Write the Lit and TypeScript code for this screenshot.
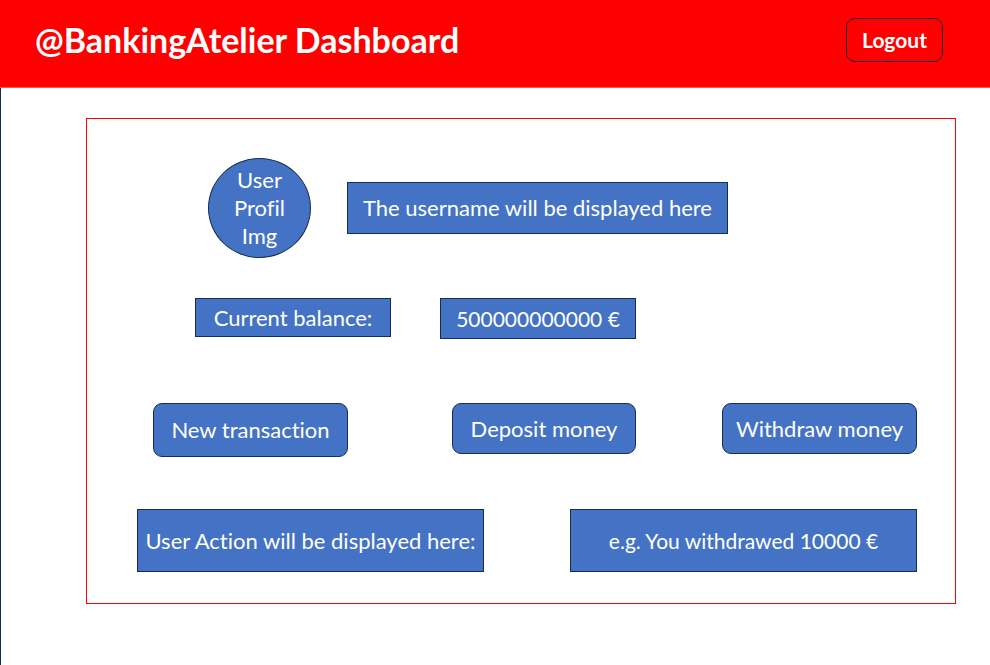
import { LitElement, html, css } from "lit";
import { customElement } from "lit/decorators.js";

@customElement("app-root")
export class AppRoot extends LitElement {
  static styles = css`
    :host {
      display: flex;
      flex-direction: column;
      min-height: 100vh;
      background: #ffffff;
      color: #ffffff;
      font-family: Lato, "Liberation Sans", sans-serif;
      font-size: 22px;
      line-height: 28px;
      font-variant-ligatures: none;
    }
    * {
      box-sizing: border-box;
      margin: 0;
    }
    .header {
      display: flex;
      align-items: center;
      justify-content: space-between;
      padding: 18px 47px 25px 35px;
      background: #ff0000;
      border-bottom: 1px solid #ff5a1e;
    }
    .title {
      font-size: 34px;
      line-height: 44px;
      font-weight: 700;
    }
    button {
      font: inherit;
      color: inherit;
      border: 1px solid #172c51;
      border-radius: 9px;
      padding: 0;
      cursor: pointer;
      white-space: nowrap;
    }
    .logout {
      width: 97px;
      height: 44px;
      background: transparent;
      font-size: 21px;
      font-weight: 700;
    }
    .main {
      flex: 1;
      border-left: 1px solid #172c51;
      padding: 30px 34px 61px 85px;
    }
    .panel {
      border: 1px solid #ff0000;
      padding: 39px 38px 31px 50px;
    }
    .row {
      display: flex;
      align-items: flex-start;
    }
    .box {
      display: flex;
      align-items: center;
      justify-content: center;
      background: #4472c4;
      border: 1px solid #172c51;
      text-align: center;
      white-space: nowrap;
    }
    .profile {
      align-items: center;
      gap: 36px;
      padding-left: 71px;
    }
    .avatar {
      width: 103px;
      height: 100px;
      border-radius: 50%;
      padding: 0 20px;
      white-space: normal;
    }
    .username {
      width: 381px;
      height: 52px;
    }
    .balance {
      gap: 49px;
      margin-top: 40px;
      padding-left: 58px;
    }
    .label {
      width: 196px;
      height: 39px;
    }
    .amount {
      width: 196px;
      height: 41px;
    }
    .figures {
      font-size: 21px;
    }
    .actions {
      display: grid;
      grid-template-columns: 299fr 270fr 195fr;
      margin-top: 64px;
      padding-left: 16px;
    }
    .action {
      width: 195px;
      height: 51px;
      background: #4472c4;
    }
    .transaction {
      height: 54px;
    }
    .deposit {
      width: 184px;
    }
    .log {
      align-items: flex-end;
      justify-content: space-between;
      margin-top: 52px;
    }
    .entry {
      width: 347px;
      height: 63px;
    }
  `;

  render() {
    return html`
      <header class="header">
        <h1 class="title">@BankingAtelier Dashboard</h1>
        <button class="logout" type="button">Logout</button>
      </header>
      <main class="main">
        <section class="panel">
          <div class="row profile">
            <div class="box avatar">User Profil Img</div>
            <p class="box username">The username will be displayed here</p>
          </div>
          <div class="row balance">
            <p class="box label">Current balance:</p>
            <p class="box amount figures">500000000000 €</p>
          </div>
          <div class="row actions">
            <button class="action transaction" type="button">New transaction</button>
            <button class="action deposit" type="button">Deposit money</button>
            <button class="action" type="button">Withdraw money</button>
          </div>
          <div class="row log">
            <p class="box entry">User Action will be displayed here:</p>
            <p class="box entry figures">e.g. You withdrawed 10000 €</p>
          </div>
        </section>
      </main>
    `;
  }
}
